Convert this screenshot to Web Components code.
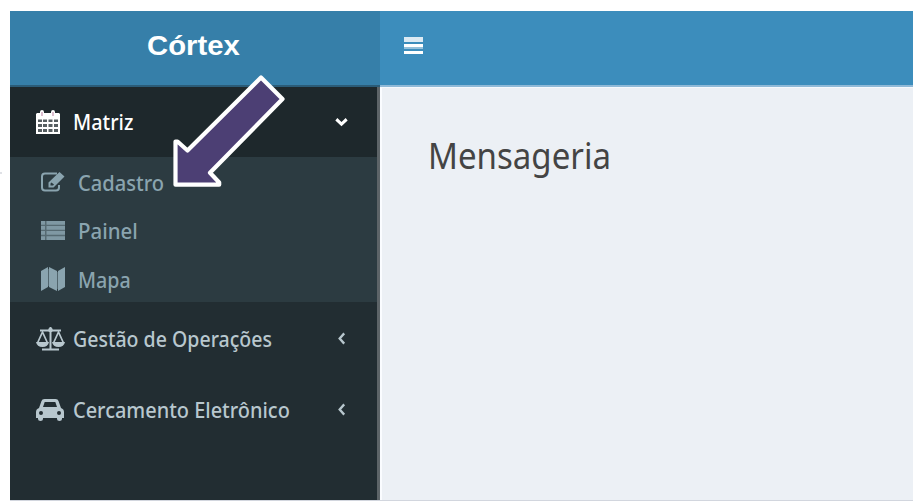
<!DOCTYPE html>
<html lang="pt-BR">
<head>
<meta charset="utf-8">
<title>Córtex</title>
<style>
html,body{margin:0;background:#fff}
body{width:913px;height:501px;overflow:hidden;font-family:"Noto Sans","Open Sans",sans-serif}
</style>
</head>
<body>
<cortex-app></cortex-app>
<script>
// Label whose glyphs are condensed to a given advance width.
customElements.define('fit-text', class extends HTMLElement {
  connectedCallback() {
    const w = +this.getAttribute('width');
    this.attachShadow({mode:'open'}).innerHTML = `
      <style>:host{display:block;width:${w}px;white-space:nowrap;line-height:1;flex:none}
      span{display:inline-block;transform-origin:0 50%}</style><span><slot></slot></span>`;
    const s = this.shadowRoot.querySelector('span');
    s.style.transform = `scaleX(${w / s.offsetWidth})`;
  }
});

const ICONS = {
  calendar: ['0 0 24 24', '<path fill-rule="evenodd" d="M1 3h3V2q0-2 2-2t2 2v1h7V2q0-2 2-2t2 2v1h4l1 1v20H0V4zM2 9.500v2.500h4V9.500zm5 0v2.500h4V9.500zm5.500 0v2.500h4V9.500zm5.500 0v2.500h4V9.500zM2 14v3h4v-3zm5 0v3h4v-3zm5.500 0v3h4v-3zm5.500 0v3h4v-3zM2 19v3h4v-3zm5 0v3h4v-3zm5.500 0v3h4v-3zm5.500 0v3h4v-3z"/><path d="M2 9h20v13H2z" opacity=".25"/><path d="M6 2v4M17 2v4" stroke="#c99bb5" stroke-width="1.300"/>'],
  edit: ['0 0 24 20', '<path d="M16 1.500H4Q1 1.500 1 4.500v11q0 3 3 3h11q3 0 3-3V13" fill="none" stroke="currentColor" stroke-width="2"/><path fill-rule="evenodd" d="M7.500 15.500v-5L18.500 0l5 4.500-11 11zM9.500 11.500v2h2.500l1-1-2.500-2z"/>'],
  list: ['0 0 24 20', '<path d="M0 0h24v20H0z" opacity=".45"/><path d="M0 0h4v4H0zM5.500 0H24v4H5.500zM0 5.300h4v4H0zM5.500 5.300H24v4H5.500zM0 10.600h4v4H0zM5.500 10.600H24v4H5.500zM0 16h4v4H0zM5.500 16H24v4H5.500z" opacity=".8"/>'],
  map: ['0 0 24 24', '<path d="M0 4l7-4v20l-7 4zM8 0l8 4v20l-8-4zM17 4l7-4v20l-7 4z"/><path d="M7 2h1v17H7zM16 5h1v17h-1z" opacity=".4"/>'],
  scale: ['0 0 29 24', '<path d="M4 3.500h21M14.500 0v22M6 22.500h17" fill="none" stroke="currentColor" stroke-width="2"/><circle cx="14.500" cy="3" r="2.300"/><path d="M1.500 16L6.500 5l5 11M17.500 16l5-11 5 11" fill="none" stroke="currentColor" stroke-width="1.700"/><path d="M0 15h13q-1 5-6.500 5T0 15zM16 15h13q-1 5-6.500 5T16 15z"/>'],
  car: ['0 0 28 22', '<path fill-rule="evenodd" d="M3 9l2.500-7Q6 0 8.500 0h11Q22 0 22.500 2L25 9q3 1 3 4v6h-2v1q0 2-2.500 2T21 20v-1H7v1q0 2-2.500 2T2 20v-1H0v-6q0-3 3-4zm4-1h14l-1.700-5H8.700zM5 12a2 2 0 100 4 2 2 0 000-4zm18 0a2 2 0 100 4 2 2 0 000-4z"/>'],
  down: ['0 0 16 10', '<path d="M2.500 2.200L8 7.200l5.500-5" fill="none" stroke="currentColor" stroke-width="3.200"/>'],
  left: ['0 0 10 14', '<path d="M8 1.500L3 7l5 5.500" fill="none" stroke="currentColor" stroke-width="2.600"/>'],
  bars: ['0 0 19 17', '<path d="M0 0h19v5H0z" opacity=".82"/><path d="M0 7h19v3H0zM0 14h19v3H0z"/><path d="M0 10h19v2H0z" opacity=".45"/>']
};
customElements.define('cx-icon', class extends HTMLElement {
  connectedCallback() {
    const [box, art] = ICONS[this.getAttribute('name')];
    const w = this.getAttribute('w'), h = this.getAttribute('h');
    this.attachShadow({mode:'open'}).innerHTML = `
      <style>:host{display:block;flex:none;width:${w}px;height:${h}px}svg{display:block;width:100%;height:100%;fill:currentColor}</style>
      <svg viewBox="${box}" preserveAspectRatio="none" aria-hidden="true">${art}</svg>`;
  }
});

customElements.define('menu-item', class extends HTMLElement {
  connectedCallback() {
    this.attachShadow({mode:'open'}).innerHTML = `
      <style>
      :host{display:flex;align-items:center;box-sizing:border-box;height:71px;padding:0 28px 0 26px;color:#b8c7ce;font-size:21.500px;font-weight:500}
      :host([active]){height:70px;background:#1e282c;color:#fff}
      :host([sub]){height:48.500px;padding-left:31px;color:#8aa4af}
      .icon{width:37px;flex:none;display:flex}
      .end{margin-left:auto;width:16px;display:flex;justify-content:center}
      </style>
      <div class="icon"><slot name="icon"></slot></div><slot></slot><div class="end"><slot name="end"></slot></div>`;
  }
});

customElements.define('side-bar', class extends HTMLElement {
  connectedCallback() {
    this.attachShadow({mode:'open'}).innerHTML = `
      <style>
      :host{display:block;box-sizing:border-box;background:#222d32;border-right:3px solid #5d6468}
      nav{display:flex;flex-direction:column}
      .sub{background:#2c3b41;height:145px;box-sizing:border-box;padding-top:1px;margin-bottom:1px}
      </style>
      <nav>
      <menu-item active><cx-icon slot="icon" name="calendar" w="24" h="24"></cx-icon><fit-text width="60">Matriz</fit-text><cx-icon slot="end" name="down" w="15" h="10"></cx-icon></menu-item>
      <div class="sub">
      <menu-item sub><cx-icon slot="icon" name="edit" w="24" h="20"></cx-icon><fit-text width="86">Cadastro</fit-text></menu-item>
      <menu-item sub><cx-icon slot="icon" name="list" w="24" h="19"></cx-icon><fit-text width="60">Painel</fit-text></menu-item>
      <menu-item sub><cx-icon slot="icon" name="map" w="24" h="24"></cx-icon><fit-text width="53">Mapa</fit-text></menu-item>
      </div>
      <menu-item><cx-icon slot="icon" name="scale" w="29" h="24"></cx-icon><fit-text width="199">Gestão de Operações</fit-text><cx-icon slot="end" name="left" w="9" h="13"></cx-icon></menu-item>
      <menu-item><cx-icon slot="icon" name="car" w="28" h="22"></cx-icon><fit-text width="217">Cercamento Eletrônico</fit-text><cx-icon slot="end" name="left" w="9" h="13"></cx-icon></menu-item>
      </nav>`;
  }
});

customElements.define('top-bar', class extends HTMLElement {
  connectedCallback() {
    this.attachShadow({mode:'open'}).innerHTML = `
      <style>
      :host{display:flex;color:#fff}
      .logo{width:370px;flex:none;box-sizing:border-box;padding:21px 0 0 137px;background:#367fa9;border-bottom:2px solid #2b5c78;font:bold 28px "Liberation Sans",Arial,sans-serif}
      .bar{flex:1;box-sizing:border-box;padding:26px 0 0 24px;background:#3c8dbc;border-bottom:2px solid #8fb9d7}
      </style>
      <div class="logo"><fit-text width="93">Córtex</fit-text></div>
      <div class="bar"><cx-icon name="bars" w="19" h="17"></cx-icon></div>`;
  }
});

customElements.define('pointer-arrow', class extends HTMLElement {
  connectedCallback() {
    this.attachShadow({mode:'open'}).innerHTML = `
      <style>:host{position:absolute;left:170px;top:70px;width:120px;height:120px}svg{display:block}</style>
      <svg width="120" height="120" viewBox="170 70 120 120"><path d="M261 77.500L283 99 210.500 172.700 219.500 184.700H175.500V141L187.700 149.800Z" fill="#4c3f74" stroke="#fff" stroke-width="4.200" stroke-linejoin="round"/></svg>`;
    const p = this.shadowRoot.querySelector('path');
    p.setAttribute('d', 'M261 77.500L282.500 99 210 172.700 219.200 182.500V184.700H175.500V141.500H177.500L187.500 150.500Z');
  }
});

customElements.define('cortex-app', class extends HTMLElement {
  connectedCallback() {
    this.attachShadow({mode:'open'}).innerHTML = `
      <style>
      :host{display:grid;position:relative;box-sizing:border-box;width:913px;height:501px;padding:11px 0 0 10px;grid-template:76px 413px 1px / 370px 1fr;background:#fff}
      :host::before{content:"";position:absolute;left:0;top:172px;width:2px;height:2px;background:#dfe1e6}
      top-bar{grid-column:1/-1}
      main{background:#ecf0f5;border-left:2px solid #fafcff;border-top:1px solid #f5f8fc;box-sizing:border-box;padding:48px 0 0 46px}
      h1{margin:0;font-size:37px;font-weight:400;color:#444}
      footer{grid-column:1/-1;background:#d2d6de}
      </style>
      <top-bar></top-bar><side-bar></side-bar>
      <main><h1><fit-text width="183">Mensageria</fit-text></h1></main><footer></footer>
      <pointer-arrow></pointer-arrow>`;
  }
});
</script>
</body>
</html>
